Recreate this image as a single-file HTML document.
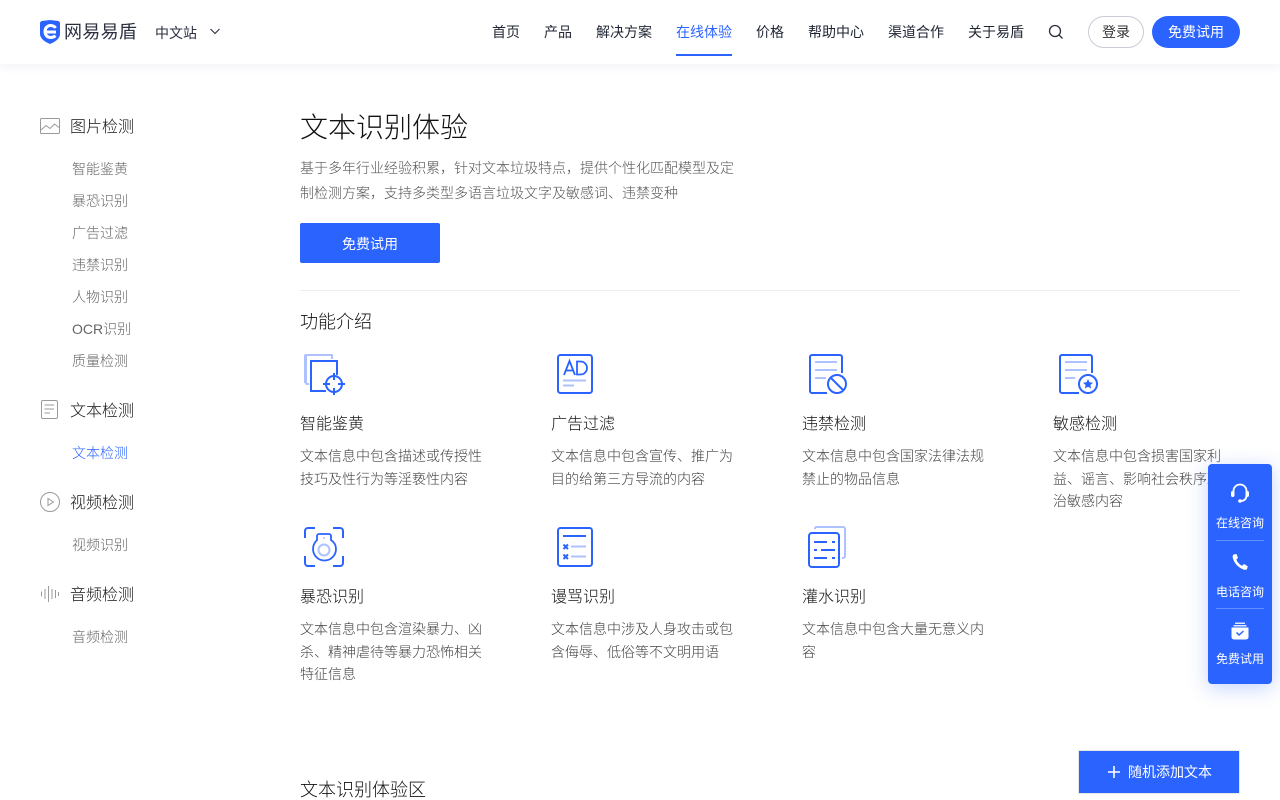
<!DOCTYPE html>
<html lang="zh-CN">
<head>
<meta charset="utf-8">
<title>文本识别体验</title>
<style>
*{box-sizing:border-box}
html,body{margin:0;padding:0;width:1280px;height:800px;overflow:hidden;background:#fff}
body{position:relative;font-family:"Liberation Sans","Noto Sans CJK SC",sans-serif;color:#222}
.t{position:absolute;white-space:nowrap;line-height:22px}
svg{position:absolute;overflow:visible}
header{position:absolute;left:0;top:0;width:1280px;height:64px;background:#fff;box-shadow:0 2px 10px rgba(40,60,110,.08)}
.nav{font-size:14px;color:#1f2533;top:21px}
.h{font-size:16px;color:#111;left:70px;font-weight:300}
.s{font-size:14px;color:#666;left:72px;font-weight:300}
.ft{font-size:16px;color:#111;font-weight:300}
.fd{font-size:14px;color:#444;line-height:22.5px;white-space:nowrap;font-weight:300}
.w3{font-weight:300}
.side{position:absolute;left:1208px;top:464px;width:64px;height:220px;background:#2b63ff;border-radius:4px;box-shadow:0 4px 20px rgba(43,99,255,.28)}
.side .l{position:absolute;left:8px;width:48px;height:1px;background:rgba(255,255,255,.28)}
.side .t{font-size:12px;color:#fff;left:8px;line-height:18px}
</style>
</head>
<body>
<header>
<svg style="left:40px;top:20px" width="20" height="24" viewBox="0 0 20 24"><path d="M0 2.500 1.500 1 10 0 18.500 1 20 2.500V14c0 4.500-5 8-10 10C5 22 0 18.500 0 14Z" fill="#2b63ff"/><path d="M16 12H6.500M15.500 8C14.500 6.200 12.500 5.500 10.500 5.500 7.500 5.500 5 8 5 11.500S7.500 17.500 10.500 17.500C12.500 17.500 14 17 15.500 15.800" fill="none" stroke="#fff" stroke-width="3"/></svg>
<div class="t" style="left:64px;top:21px;font-size:18px;letter-spacing:.3px;color:#2b3040">网易易盾</div>
<div class="t" style="left:155px;top:22px;font-size:14px;color:#2b3040">中文站</div>
<svg style="left:210px;top:28px" width="10" height="7" viewBox="0 0 10 7"><path d="M.5 1 5 5.500 9.500 1" fill="none" stroke="#2b3040" stroke-width="1.100"/></svg>
<div class="t nav" style="left:492px">首页</div>
<div class="t nav" style="left:544px">产品</div>
<div class="t nav" style="left:596px">解决方案</div>
<div class="t nav" style="left:676px;color:#2b63ff">在线体验</div>
<div style="position:absolute;left:676px;top:54px;width:56px;height:2px;background:#2b63ff"></div>
<div class="t nav" style="left:756px">价格</div>
<div class="t nav" style="left:808px">帮助中心</div>
<div class="t nav" style="left:888px">渠道合作</div>
<div class="t nav" style="left:968px">关于易盾</div>
<svg style="left:1048px;top:24px" width="16" height="16" viewBox="0 0 16 16"><circle cx="7" cy="7" r="5.500" fill="none" stroke="#2b3040" stroke-width="1.300"/><path d="M11 11 14.500 14.500" stroke="#2b3040" stroke-width="1.300"/></svg>
<div class="t" style="left:1088px;top:16px;width:56px;height:32px;border:1px solid #c9ccd6;border-radius:16px;font-size:14px;line-height:30px;text-align:center;color:#333">登录</div>
<div class="t" style="left:1152px;top:16px;width:88px;height:32px;background:#2b63ff;border-radius:16px;font-size:14px;line-height:32px;text-align:center;color:#fff">免费试用</div>
</header>

<svg style="left:40px;top:118px" width="20" height="16" viewBox="0 0 20 16" fill="none" stroke="#9a9a9a" stroke-width="1"><rect x=".5" y=".5" width="19" height="15" rx="1"/><path d="M1 12 6 7.500 10 10.500 14.500 6 19 9.500"/></svg>
<div class="t h" style="top:117px">图片检测</div>
<div class="t s" style="top:158px">智能鉴黄</div>
<div class="t s" style="top:190px">暴恐识别</div>
<div class="t s" style="top:222px">广告过滤</div>
<div class="t s" style="top:254px">违禁识别</div>
<div class="t s" style="top:286px">人物识别</div>
<div class="t s" style="top:318px">OCR识别</div>
<div class="t s" style="top:350px">质量检测</div>

<svg style="left:41px;top:400px" width="17" height="19" viewBox="0 0 17 19" fill="none" stroke="#9a9a9a" stroke-width="1"><rect x=".5" y=".5" width="16" height="18" rx="1.500"/><path d="M3.500 5H13M3.500 9H13M3.500 13H9"/></svg>
<div class="t h" style="top:401px">文本检测</div>
<div class="t s" style="top:442px;color:#2b63ff">文本检测</div>

<svg style="left:40px;top:492px" width="20" height="20" viewBox="0 0 20 20" fill="none" stroke="#9a9a9a" stroke-width="1"><circle cx="10" cy="10" r="9.500"/><path d="M8 6.500 13.500 10 8 13.500Z"/></svg>
<div class="t h" style="top:493px">视频检测</div>
<div class="t s" style="top:534px">视频识别</div>

<svg style="left:41px;top:585px" width="18" height="18" viewBox="0 0 18 18" fill="none" stroke="#9a9a9a" stroke-width="1"><path d="M.5 6.500V11.500M4 4V14M7.500 1V17M11 4V14M14.500 5V13M17.500 7V11"/></svg>
<div class="t h" style="top:585px">音频检测</div>
<div class="t s" style="top:626px">音频检测</div>

<div class="t w3" style="left:300px;top:108px;font-size:28px;line-height:40px;color:#111">文本识别体验</div>
<div class="t w3" style="left:300px;top:156px;font-size:14px;line-height:25px;color:#555;width:440px;white-space:normal">基于多年行业经验积累，针对文本垃圾特点，提供个性化匹配模型及定制检测方案，支持多类型多语言垃圾文字及敏感词、违禁变种</div>
<div class="t" style="left:300px;top:223px;width:140px;height:40px;background:#2b63ff;border-radius:2px;color:#fff;font-size:14px;line-height:42px;text-align:center">免费试用</div>
<div style="position:absolute;left:300px;top:290px;width:940px;height:1px;background:#ececec"></div>
<div class="t w3" style="left:300px;top:309px;font-size:18px;line-height:26px;color:#111">功能介绍</div>

<svg style="left:304px;top:354px" width="42" height="42" viewBox="0 0 42 42" fill="none" stroke="#2b63ff" stroke-width="2"><path d="M1 29V2a1 1 0 0 1 1-1h27" stroke="#adc2ff"/><path d="M2 1V29a1 1 0 0 0 1 1h2M28 1v4" stroke="#adc2ff"/><path d="M22 37H7V7h26v14"/><circle cx="30" cy="30" r="8"/><path d="M30 19v7M30 34v7M19 30h7M34 30h7"/></svg>
<svg style="left:557px;top:354px" width="36" height="40" viewBox="0 0 36 40" fill="none" stroke="#2b63ff"><rect x="1" y="1" width="34" height="38" rx="2.500" stroke-width="2"/><path d="M7 21 12.500 7 18 21M9 16.500H16M20 7.500h3.500a6.500 6.500 0 0 1 0 13H20Z" stroke-width="1.800"/><path d="M6 26.500H29M6 31.500H17" stroke="#adc2ff" stroke-width="2"/></svg>
<svg style="left:809px;top:354px" width="38" height="40" viewBox="0 0 38 40" fill="none" stroke="#2b63ff" stroke-width="2"><path d="M33 19V3a2 2 0 0 0-2-2H3a2 2 0 0 0-2 2v34a2 2 0 0 0 2 2h15"/><path d="M6 8H28M6 16H28M6 24H17" stroke="#adc2ff"/><circle cx="28" cy="30" r="9"/><path d="M22 24 34 36"/></svg>
<svg style="left:1059px;top:354px" width="39" height="40" viewBox="0 0 39 40" fill="none" stroke="#2b63ff" stroke-width="2"><path d="M33 19V3a2 2 0 0 0-2-2H3a2 2 0 0 0-2 2v34a2 2 0 0 0 2 2h17"/><path d="M6 8H28M6 16H28M6 24H16" stroke="#adc2ff"/><circle cx="29" cy="30" r="9"/><path d="M29 25 30.500 28.300 34 28.700 31.400 31 32.100 34.500 29 32.800 25.900 34.500 26.600 31 24 28.700 27.500 28.300Z" fill="#2b63ff" stroke="none"/></svg>

<div class="t ft" style="left:300px;top:414px">智能鉴黄</div>
<div class="t fd" style="left:300px;top:445px">文本信息中包含描述或传授性<br>技巧及性行为等淫亵性内容</div>
<div class="t ft" style="left:551px;top:414px">广告过滤</div>
<div class="t fd" style="left:551px;top:445px">文本信息中包含宣传、推广为<br>目的给第三方导流的内容</div>
<div class="t ft" style="left:802px;top:414px">违禁检测</div>
<div class="t fd" style="left:802px;top:445px">文本信息中包含国家法律法规<br>禁止的物品信息</div>
<div class="t ft" style="left:1053px;top:414px">敏感检测</div>
<div class="t fd" style="left:1053px;top:445px">文本信息中包含损害国家利<br>益、谣言、影响社会秩序政<br>治敏感内容</div>

<svg style="left:304px;top:527px" width="40" height="40" viewBox="0 0 40 40" fill="none" stroke="#2b63ff" stroke-width="2"><path d="M1 11V4a3 3 0 0 1 3-3h7M29 1h7a3 3 0 0 1 3 3v7M39 29v7a3 3 0 0 1-3 3h-7M11 39H4a3 3 0 0 1-3-3v-7"/><path d="M14 7h10a2 2 0 0 1 2 2v4c3 2 5 5 5 9a11.500 11.500 0 0 1-23 0c0-4 2-7 4-9V9a2 2 0 0 1 2-2Z" transform="translate(1 0)" stroke-width="1.800"/><circle cx="20" cy="23" r="5.500" stroke="#adc2ff"/><circle cx="20" cy="11" r="1" fill="#adc2ff" stroke="none"/></svg>
<svg style="left:557px;top:527px" width="36" height="40" viewBox="0 0 36 40" fill="none" stroke="#2b63ff" stroke-width="2"><rect x="1" y="1" width="34" height="38" rx="2.500"/><path d="M6 9H29"/><path d="M6.500 17.500 11 22M11 17.500 6.500 22M6.500 27.500 11 32M11 27.500 6.500 32"/><path d="M14 19.500H29M14 29.500H29" stroke="#adc2ff"/></svg>
<svg style="left:808px;top:526px" width="38" height="42" viewBox="0 0 38 42" fill="none" stroke="#2b63ff" stroke-width="2"><path d="M7 3V2.500A1.500 1.500 0 0 1 8.500 1H35a2 2 0 0 1 2 2v27a2 2 0 0 1-2 2h-1" stroke="#adc2ff"/><rect x="1" y="7" width="30" height="34" rx="3"/><path d="M6 16H19M24 16H27M6 24H9M13 24H27M6 32H19M24 32H27"/></svg>

<div class="t ft" style="left:300px;top:587px">暴恐识别</div>
<div class="t fd" style="left:300px;top:618px">文本信息中包含渲染暴力、凶<br>杀、精神虐待等暴力恐怖相关<br>特征信息</div>
<div class="t ft" style="left:551px;top:587px">谩骂识别</div>
<div class="t fd" style="left:551px;top:618px">文本信息中涉及人身攻击或包<br>含侮辱、低俗等不文明用语</div>
<div class="t ft" style="left:802px;top:587px">灌水识别</div>
<div class="t fd" style="left:802px;top:618px">文本信息中包含大量无意义内<br>容</div>

<div class="t w3" style="left:300px;top:777px;font-size:18px;line-height:26px;color:#111">文本识别体验区</div>
<div class="t" style="left:1078px;top:750px;width:162px;height:44px;background:#2b63ff;border:1px solid #e6e6e6;color:#fff;font-size:14px;line-height:42px;padding-left:49px">随机添加文本</div>
<svg style="left:1108px;top:766px" width="12" height="12" viewBox="0 0 12 12"><path d="M6 0V12M0 6H12" stroke="#fff" stroke-width="1.600"/></svg>

<div class="side">
<svg style="left:22px;top:19px" width="20" height="22" viewBox="0 0 20 22" fill="none"><path d="M3.500 9V8a6.500 6.500 0 0 1 13 0v4c0 4-2 6-6 6" stroke="#fff" stroke-width="1.800"/><rect x="1" y="8" width="3.500" height="6" rx="1.700" fill="#fff"/><rect x="15.500" y="8" width="3.500" height="6" rx="1.700" fill="#fff"/><circle cx="10" cy="18" r="1.800" fill="#fff"/></svg>
<div class="t" style="top:50px">在线咨询</div>
<div class="l" style="top:76px"></div>
<svg style="left:23px;top:89px" width="18" height="18" viewBox="0 0 18 18"><path d="M2.500 1.500 5.500 1 7 5 5.300 6.500C6.300 9 8.500 11.500 11 12.700L13 11l3.700 2.300-.7 3c-1 .7-2.500.7-3.500.2C7 14.500 3 10 1.700 4.500c-.2-1 .1-2.200.8-3Z" fill="#fff"/></svg>
<div class="t" style="top:119px">电话咨询</div>
<div class="l" style="top:144px"></div>
<svg style="left:23px;top:158px" width="18" height="18" viewBox="0 0 18 18"><path d="M4 .5H14V2H4ZM2.500 3H15.500V4.500H2.500Z" fill="#fff" opacity=".85"/><path d="M1 5.500H17a.5.500 0 0 1 .5.500V15a2.500 2.500 0 0 1-2.500 2.500H3A2.500 2.500 0 0 1 .5 15V6A.5.500 0 0 1 1 5.500Z" fill="#fff"/><path d="M5.500 10.500 8 13 12.500 9" fill="none" stroke="#2b63ff" stroke-width="1.500"/></svg>
<div class="t" style="top:186px">免费试用</div>
</div>
</body>
</html>
